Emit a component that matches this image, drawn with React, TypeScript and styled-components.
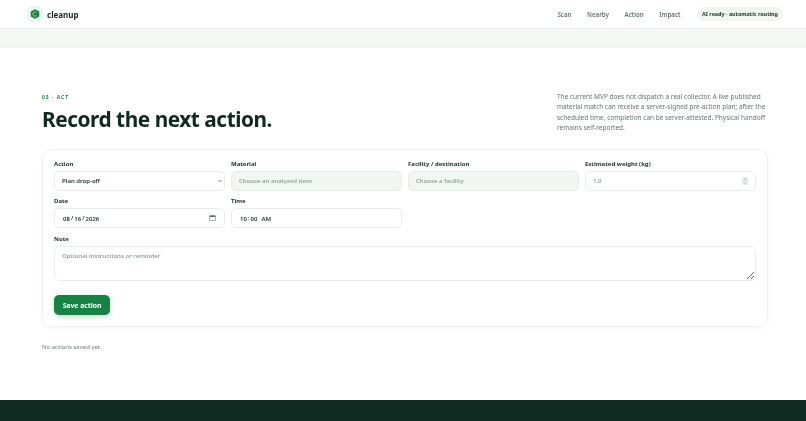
import styled, { createGlobalStyle } from "styled-components";
import { ChevronDown, ChevronUp } from "lucide-react";

const GlobalStyle = createGlobalStyle`
  html, body {
    margin: 0;
    padding: 0;
    height: 100%;
    overflow: hidden;
    background: #fff;
    font-family: "Noto Sans", "Liberation Sans", sans-serif;
    color: #10291f;
  }
  * { box-sizing: border-box; }
`;

const Page = styled.div`
  display: flex;
  flex-direction: column;
  height: 421px;
  overflow: hidden;
  transform: translateZ(0);
`;

const Header = styled.header`
  display: flex;
  align-items: center;
  justify-content: space-between;
  height: 29px;
  flex-shrink: 0;
  padding: 0 23px 0 27px;
  border-bottom: 1px solid #edf1ee;
`;

const Brand = styled.div`
  display: flex;
  align-items: center;
  gap: 4px;
  font-size: 8px;
  font-weight: 700;
  color: #15291f;
`;

const LogoBox = styled.div`
  display: flex;
  align-items: center;
  justify-content: center;
  width: 16px;
  height: 16px;
  border-radius: 5px;
  background: #f1f5f2;
`;

const Nav = styled.nav`
  display: flex;
  align-items: center;
`;

const NavLink = styled.a`
  font-size: 6.2px;
  font-weight: 600;
  color: #66746d;
  margin-right: 15.5px;
`;

const StatusPill = styled.div`
  display: flex;
  align-items: center;
  height: 14px;
  padding: 0 5px;
  margin-left: 1px;
  border-radius: 7px;
  background: #f1f5f2;
  font-size: 5.4px;
  font-weight: 700;
  color: #1b2f26;
`;

const Band = styled.div`
  height: 19px;
  flex-shrink: 0;
  background: #f5f7f5;
  border-bottom: 1px solid #f1f4f2;
`;

const Main = styled.main`
  flex: 1;
  padding: 44px 38px 0 42px;
`;

const Intro = styled.section`
  display: flex;
  justify-content: space-between;
  align-items: flex-start;
  height: 57px;
`;

const Heading = styled.div`
  padding-top: 2px;
`;

const Eyebrow = styled.div`
  font-size: 5px;
  line-height: 7px;
  font-weight: 700;
  letter-spacing: 1px;
  color: #1a8046;
`;

const Title = styled.h1`
  margin: 3px 0 0;
  font-size: 20.8px;
  line-height: 30px;
  font-weight: 700;
  letter-spacing: -0.45px;
  color: #10291f;
`;

const Lead = styled.p`
  width: 211px;
  margin: 0;
  font-size: 6.5px;
  line-height: 10.4px;
  color: #66746d;
`;

const Card = styled.form`
  height: 178px;
  padding: 10px 11px 0;
  border: 1px solid #edf1ee;
  border-radius: 10px;
  box-shadow: 0 2px 6px rgba(16, 41, 31, 0.03);
`;

const FieldGrid = styled.div`
  display: grid;
  grid-template-columns: repeat(4, 171px);
  column-gap: 6px;
  row-gap: 6px;
`;

const Field = styled.label<{ $wide?: boolean }>`
  display: flex;
  flex-direction: column;
  gap: 3px;
  grid-column: ${(p) => (p.$wide ? "1 / -1" : "auto")};
  margin-top: ${(p) => (p.$wide ? "1px" : "0")};
`;

const LabelText = styled.span`
  font-size: 6px;
  line-height: 8px;
  font-weight: 700;
  color: #1d3027;
`;

const ControlShell = styled.div`
  position: relative;
  display: flex;
`;

const IconSlot = styled.span<{ $right: number }>`
  position: absolute;
  top: 50%;
  right: ${(p) => p.$right}px;
  display: flex;
  transform: translateY(-50%);
  color: #5f6c65;
  pointer-events: none;
`;

const SpinBox = styled.span`
  position: absolute;
  top: 6px;
  right: 8px;
  display: flex;
  flex-direction: column;
  align-items: center;
  justify-content: center;
  width: 6px;
  height: 8px;
  border-radius: 1px;
  background: #e9ecea;
  color: #7c8781;
  pointer-events: none;
`;

// native controls are drawn at double size and zoomed so the resize grip shrinks with them
const controlCss = `
  zoom: 0.5;
  width: 100%;
  height: 40px;
  padding: 0 14px;
  border: 2px solid #e8ece9;
  border-radius: 10px;
  background: #fff;
  font-family: "Noto Sans", "Liberation Sans", sans-serif;
  font-size: 12px;
  font-weight: 600;
  color: #1d3027;
  outline: none;
`;

const Select = styled.select`
  ${controlCss}
  appearance: none;
  padding: 0 14px;
`;

const Input = styled.input<{ $locked?: boolean }>`
  ${controlCss}
  background: ${(p) => (p.$locked ? "#f2f6f3" : "#fff")};
  &::placeholder { color: #939e98; opacity: 1; }
  &::-webkit-inner-spin-button { display: none; }
  &::-webkit-calendar-picker-indicator { display: none; }
  &::-webkit-datetime-edit { padding-left: 1px; }
  &::-webkit-datetime-edit-text { padding: 0 1px; }
  &::-webkit-datetime-edit-ampm-field { margin-left: 2px; }
`;

const TextArea = styled.textarea`
  ${controlCss}
  display: block;
  height: 70px;
  padding: 10px 14px;
  &::placeholder { color: #939e98; opacity: 1; }
`;

const SaveButton = styled.button`
  display: block;
  width: 56px;
  height: 20px;
  margin-top: 14px;
  padding: 0;
  border: 0;
  border-radius: 5px;
  background: #168244;
  box-shadow: 0 2px 5px rgba(22, 130, 68, 0.28);
  font-family: inherit;
  font-size: 6.8px;
  font-weight: 700;
  color: #fff;
`;

const EmptyNote = styled.p`
  margin: 16px 0 0;
  font-size: 6px;
  line-height: 9px;
  color: #707d76;
`;

const Footer = styled.footer`
  height: 21px;
  flex-shrink: 0;
  background: #0f2a20;
`;

function LogoMark() {
  return (
    <svg width="10" height="10" viewBox="0 0 20 20" aria-hidden="true">
      <path d="M10 0.5 18.5 5v10L10 19.5 1.5 15V5z" fill="#168244" />
      <path d="M13.5 7.2A4.4 4.4 0 1 0 13.5 12.8" fill="none" stroke="#7fe0a5" strokeWidth="2" />
    </svg>
  );
}

function CalendarMark() {
  return (
    <svg width="7" height="7" viewBox="0 0 14 14" aria-hidden="true">
      <rect x="1.5" y="2.5" width="11" height="10" fill="none" stroke="currentColor" strokeWidth="1" />
      <rect x="1.5" y="2.5" width="11" height="2.5" fill="currentColor" />
      <path d="M4.5 1v2M9.5 1v2" stroke="currentColor" strokeWidth="1" />
    </svg>
  );
}

export default function App() {
  return (
    <Page>
      <GlobalStyle />
      <Header>
        <Brand>
          <LogoBox>
            <LogoMark />
          </LogoBox>
          cleanup
        </Brand>
        <Nav>
          <NavLink>Scan</NavLink>
          <NavLink>Nearby</NavLink>
          <NavLink>Action</NavLink>
          <NavLink>Impact</NavLink>
          <StatusPill>AI ready · automatic routing</StatusPill>
        </Nav>
      </Header>
      <Band />
      <Main>
        <Intro>
          <Heading>
            <Eyebrow>03 · ACT</Eyebrow>
            <Title>Record the next action.</Title>
          </Heading>
          <Lead>
            The current MVP does not dispatch a real collector. A live published material match can
            receive a server-signed pre-action plan; after the scheduled time, completion can be
            server-attested. Physical handoff remains self-reported.
          </Lead>
        </Intro>
        <Card onSubmit={(e) => e.preventDefault()}>
          <FieldGrid>
            <Field>
              <LabelText>Action</LabelText>
              <ControlShell>
                <Select defaultValue="drop">
                  <option value="drop">Plan drop-off</option>
                  <option value="pickup">Plan pickup</option>
                </Select>
                <IconSlot $right={2}>
                  <ChevronDown size={6} strokeWidth={3} />
                </IconSlot>
              </ControlShell>
            </Field>
            <Field>
              <LabelText>Material</LabelText>
              <Input $locked readOnly placeholder="Choose an analyzed item" />
            </Field>
            <Field>
              <LabelText>Facility / destination</LabelText>
              <Input $locked readOnly placeholder="Choose a facility" />
            </Field>
            <Field>
              <LabelText>Estimated weight (kg)</LabelText>
              <ControlShell>
                <Input type="number" step="0.1" placeholder="1.0" />
                <SpinBox>
                  <ChevronUp size={4} strokeWidth={3} />
                  <ChevronDown size={4} strokeWidth={3} />
                </SpinBox>
              </ControlShell>
            </Field>
            <Field>
              <LabelText>Date</LabelText>
              <ControlShell>
                <Input type="date" defaultValue="2026-08-16" />
                <IconSlot $right={9}>
                  <CalendarMark />
                </IconSlot>
              </ControlShell>
            </Field>
            <Field>
              <LabelText>Time</LabelText>
              <Input type="time" defaultValue="10:00" />
            </Field>
            <Field $wide>
              <LabelText>Note</LabelText>
              <TextArea placeholder="Optional instructions or reminder" />
            </Field>
          </FieldGrid>
          <SaveButton type="submit">Save action</SaveButton>
        </Card>
        <EmptyNote>No actions saved yet.</EmptyNote>
      </Main>
      <Footer />
    </Page>
  );
}
